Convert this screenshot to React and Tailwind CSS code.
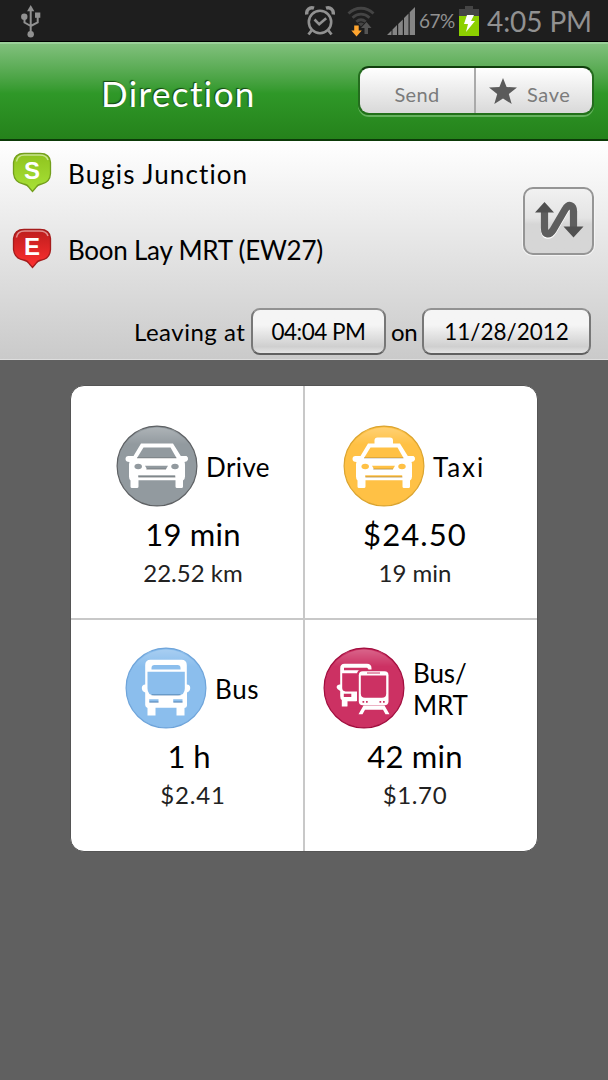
import { useId } from "react";

function StatusBar() {
  return (
    <div className="flex h-[42px] shrink-0 items-center border-b border-black bg-[#1e1e1e] text-[#919191]">
      <svg className="ml-[20px] h-[34px] w-[21px]" viewBox="0 0 21 34" fill="none" stroke="currentColor" strokeWidth="2">
        <path d="M10.7 6v24M4.5 14v4.5l6.2 3.5M17.7 12v6.5L10.7 22" />
        <path d="M10.7 1l3.6 6.2H7.1z" fill="currentColor" stroke="none" />
        <circle cx="4.3" cy="12.8" r="3.2" fill="currentColor" stroke="none" />
        <circle cx="10.7" cy="30.3" r="3.2" fill="currentColor" stroke="none" />
        <path d="M15 8.5h5.3v5.3H15z" fill="currentColor" stroke="none" />
      </svg>

      <svg className="ml-[264px] h-[31px] w-[30px]" viewBox="0 0 30 31" fill="none" stroke="currentColor">
        <circle cx="15" cy="17" r="11.2" strokeWidth="2.6" />
        <path d="M9.5 14.5l4.7 4.8 7-6" strokeWidth="2.6" />
        <path d="M1.8 9.5C1 5 4.800 1.600 9 3.200M28.200 9.500C29 5 25.200 1.600 21 3.200" strokeWidth="3.4" />
        <path d="M6.500 25.500L3.500 29.500M23.500 25.500l3 4" strokeWidth="2.800" />
      </svg>

      <svg className="ml-[12px] h-[32px] w-[28px]" viewBox="0 0 28 32" fill="none" stroke="#444" strokeWidth="2.8">
        <path d="M1.500 8.500c7-7 18-7 25 0M5.500 12.800c5-4.800 12-4.800 17 0M9.300 16.800c3-2.600 6.400-2.600 9.400 0" />
        <path d="M11 18.500q3-2 6 0l-3 3z" fill="#444" stroke="none" />
        <path d="M17.500 29v-6h-3.500l5.500-6 5 6h-3.500v6z" fill="#555" stroke="none" />
        <path d="M7.200 20.500h4.500v5h3.100l-5.300 6-5.200-6h2.900z" fill="#ffa52f" stroke="none" />
      </svg>

      <svg className="ml-[12px] h-[28px] w-[28px]" viewBox="0 0 28 28" fill="#858585">
        <path d="M0 28l4.500-4.500V28zM5.500 28v-5.500l4.500-4.500V28zM11.200 28V17l4.600-4.500V28zM17 28V11l4.500-4.500V28zM22.700 28V5.300L28 0v28z" />
      </svg>

      <span className="ml-[4px] w-[38px] pt-[2px] whitespace-nowrap text-[19px] tracking-[-0.5px]">67%</span>
      <svg className="ml-[2px] h-[30px] w-[20px]" viewBox="0 0 20 30">
        <path d="M0 3h6V0h8v3h6v7H0z" fill="#454545" />
        <path d="M0 10h20v20H0z" fill="#8cd000" />
        <path d="M8 9h7l-3 6h4L7 26l2-8H5z" fill="#fff" />
      </svg>
      <span className="ml-[8px] whitespace-nowrap text-[28px] tracking-[-0.1px]">4:05 PM</span>
    </div>
  );
}

function Header() {
  return (
    <div className="flex h-[99px] shrink-0 items-start border-t-2 border-b-2 border-t-[#9bd09a] border-b-[#0c3a08] bg-linear-to-b from-[#80c07c] via-[#2f9828] via-52% to-[#25821b]">
      <h1 className="mt-[23px] ml-[101px] w-[257px] whitespace-nowrap text-[35px] leading-[52px] tracking-[1.4px] text-white [text-shadow:-1px_-1px_1px_#154711]">
        Direction
      </h1>
      <div className="mt-[22px] flex h-[49px] w-[236px] overflow-hidden rounded-[11px] border-2 border-x-[#246c1e] border-t-[#103f0d] border-b-[#217019] bg-linear-to-b from-white to-[#d9d9d9] text-[20px] text-[#7b7b7b] shadow-[0_2px_0_#65b25e]">
        <button className="w-[116px] border-r-2 border-[#aaa] pt-[6px] tracking-[0.3px]">Send</button>
        <button className="flex flex-1 items-center pl-[13px]">
          <svg className="h-[26px] w-[28px]" viewBox="0 0 28 26" fill="#5b5b5b">
            <path d="M14 0l3.600 9 10.400.500-8.200 6.500 2.900 10L14 20.400 5.300 26l2.900-10L0 9.500 10.400 9z" />
          </svg>
          <span className="ml-[10px] pt-[6px] tracking-[0.6px]">Save</span>
        </button>
      </div>
    </div>
  );
}

function Marker({ letter, end }) {
  const id = useId();
  return (
    <svg className="h-[42px] w-[40px] shrink-0" viewBox="0 0 40 42">
      <defs>
        <linearGradient id={id} x1="0" y1="0" x2="0" y2="1">
          <stop offset="0" stopColor={end ? "#bd1d1d" : "#8fc31e"} />
          <stop offset="1" stopColor={end ? "#ff3030" : "#a8e237"} />
        </linearGradient>
      </defs>
      <path
        d="M12 2.500h16q10 0 10.500 9v11q-.5 9-9 10.500-4 .5-6 4l-3 3.500-3-3.500q-2-3.500-6-4-9-1.500-10-10.500v-11Q2.500 2.500 12 2.500z"
        fill={`url(#${id})`}
        stroke={end ? "#a51c1c" : "#739f1c"}
        strokeWidth="1.300"
      />
      <path d="M4.500 10.500q1-6.500 8-6.500h15q7 0 8.500 5" fill="none" stroke="#fff" strokeOpacity=".5" strokeWidth="1.500" />
      <text x="20" y="28" textAnchor="middle" fill="#fff" className="font-['Liberation_Sans',sans-serif] text-[24px] font-bold">
        {letter}
      </text>
    </svg>
  );
}

function TripForm() {
  return (
    <div className="flex h-[219px] shrink-0 flex-col border-b border-[#dedede] bg-linear-to-b from-white to-[#cacaca] text-black">
      <div className="flex h-[157px]">
        <div className="w-[523px] pl-[12px]">
          <div className="flex h-[76px] items-start pt-[10px]">
            <Marker letter="S" />
            <span className="ml-[16px] pt-[5px] text-[26px] leading-[36px] tracking-[1.1px]">Bugis Junction</span>
          </div>
          <div className="flex h-[76px] items-start pt-[10px]">
            <Marker letter="E" end />
            <span className="ml-[16px] pt-[5px] text-[26px] leading-[36px] tracking-[-0.25px]">Boon Lay MRT (EW27)</span>
          </div>
        </div>
        <button className="mt-[46px] flex h-[68px] w-[71px] items-center justify-center rounded-[10px] border-2 border-[#959595] bg-linear-to-b from-[#f1f1f1] via-[#e4e4e4] via-45% to-[#d6d6d6] to-55% pb-[3px] shadow-[0_0_0_1px_#f4f4f4]">
          <svg className="h-[38px] w-[50px]" viewBox="0 0 50 38">
            <path
              d="M10.500 10v17c0 7.500 5 7.500 8.500 2L31 8.500c4-6.500 8.500-4.500 8.500 2V26"
              fill="none"
              stroke="#fff"
              strokeWidth="7.500"
              transform="translate(0 1.200)"
            />
            <path
              d="M10.500 10v17c0 7.500 5 7.500 8.500 2L31 8.500c4-6.500 8.500-4.500 8.500 2V26"
              fill="none"
              stroke="#5e5e5e"
              strokeWidth="7.300"
            />
            <path d="M1 11.500L10.500 1 20 11.500zM29.500 25.500h20L39.500 36.500z" fill="#505050" />
          </svg>
        </button>
      </div>
      <div className="flex h-[61px] items-start pt-[10px] pl-[134px] text-[24px] leading-[48px]">
        <span className="w-[117px] whitespace-nowrap tracking-[0.5px]">Leaving at</span>
        <button className="h-[47px] w-[135px] rounded-[9px] border-2 border-x-[#777] border-t-[#929292] border-b-[#606060] bg-linear-to-b from-[#f5f5f5] from-35% via-[#cfcfcf] via-85% to-[#e4e4e4] text-[22.5px] leading-[43px] tracking-[-0.5px] whitespace-nowrap">
          04:04 PM
        </button>
        <span className="w-[36px] pl-[5px] tracking-[-0.3px]">on</span>
        <button className="h-[47px] w-[169px] rounded-[9px] border-2 border-x-[#777] border-t-[#929292] border-b-[#606060] bg-linear-to-b from-[#f5f5f5] from-35% via-[#cfcfcf] via-85% to-[#e4e4e4] text-[22.5px] leading-[43px] whitespace-nowrap">
          11/28/2012
        </button>
      </div>
    </div>
  );
}

function Car({ color, taxi }) {
  return (
    <>
      <path
        d="M24.500 18h32l7.800 12.500H70q2 1 1.500 3.500-.5 2-3.500 2.500.5 1 .5 3V51q0 3-2 4v6q0 1.500-1.500 1.500h-4.500Q59 62.500 59 61v-6.300H22V61q0 1.500-1.500 1.500h-5Q14 62.500 14 61v-6q-1.500-1-1.500-4V39.500q0-2 .5-3-4 0-4-3 0-3 3-3h5z"
        fill="#fff"
      />
      {taxi && <path d="M31 19v-4q0-3 3-3h12.500q3 0 3 3v4z" fill="#fff" />}
      <path d="M27 22h27l6 10.500H20.500z" fill={color} />
      <ellipse cx="21.700" cy="41" rx="3.700" ry="2.700" fill={color} />
      <ellipse cx="58.500" cy="41" rx="3.700" ry="2.700" fill={color} />
      <path d="M28.500 40.300h23l-2 3.500h-19zM21.700 49.700h37v2h-37z" fill={color} />
      <path d="M20.500 32.500h39.500M29.500 43.600h20M22 51.500h37" stroke="#000" strokeOpacity=".28" strokeWidth=".9" />
    </>
  );
}

function BusShape({ color }) {
  return (
    <>
      <path
        d="M25 12.300h31q5.300 0 5.300 5.500V37q3.500 0 3.400 3.500 0 3-3.200 4.500v13q0 2-2.500 2.500V68h-8v-7.700H30V68h-8v-7.500q-2.300-1-2.300-3V45q-3.300-1-3.400-4.500Q16.500 37 19.700 37V17.800q0-5.500 5.300-5.500z"
        fill="#fff"
      />
      <path d="M26 22v-1.500q0-3 3-3h23q3 0 3 3V22zM22 24.300h37.300V41q0 6.700-6.700 6.700h-24Q22 47.700 22 41zM23.700 51.700H33V55h-9.300zM47.700 51.700H57V55h-9.300z" fill={color} />
      <path d="M26 47.400h29M24 54.500h9M48 54.500h9" stroke="#123b68" strokeOpacity=".45" strokeWidth="1" />
    </>
  );
}

function BusMrt({ color }) {
  return (
    <>
      <path
        d="M21 16.300h22.500q4.500 0 4.500 4.500v5H36v28h-3.500v5H24V59h-5.700v-6.500q-1.600-1-1.600-4V43.500Q13 41.500 13 39.500q.5-3 3.700-2.500V20.800q0-4.500 4.300-4.500z"
        fill="#fff"
      />
      <path d="M33 53.800h-9V61h9z" fill={color} />
      <path d="M20.500 20.300h23q1.500.5 1.500 2.500H20.500zM18.700 25.700H36V44H22q-3.300-.5-3.300-3.500zM20.300 46.300h7.500v3.200h-7.500z" fill={color} />
      <rect x="33.500" y="22" width="33" height="37" rx="4.500" fill={color} />
      <path d="M40 58h21l5 8.700h-4l-2.500-4.500h-18L39 66.700h-4z" fill="#fff" />
      <rect x="35.300" y="23.700" width="29.700" height="34" rx="4" fill="#fff" />
      <path d="M37.300 28h25.400v18q0 4.300-4.300 4.300H41.600q-4.300 0-4.300-4.300z" fill={color} />
      <path d="M43.500 25.500h13" stroke={color} strokeWidth="1" />
      <path d="M39 53.500h1.700v1.700H39zM42.500 53.500h1.700v1.700h-1.700zM56 53.500h1.700v1.700H56zM59.500 53.500h1.700v1.700h-1.700z" fill={color} />
    </>
  );
}

const modes = [
  { key: "drive", label: "Drive", main: "19 min", sub: "22.52 km", color: "#929a9f", edge: "#5e6164" },
  { key: "taxi", label: "Taxi", main: "$24.50", sub: "19 min", color: "#ffc145", edge: "#dba42f" },
  { key: "bus", label: "Bus", main: "1 h", sub: "$2.41", color: "#8bbeed", edge: "#6ea4da" },
  { key: "mrt", label: "Bus/\nMRT", main: "42 min", sub: "$1.70", color: "#cc3163", edge: "#a10c3d" },
];

const cellStyles = {
  drive: "border-r-2 border-b-2 pl-[45px] pt-[39px]",
  taxi: "border-b-2 pl-[38px] pt-[39px]",
  bus: "border-r-2 pl-[54px] pt-[27px]",
  mrt: "pl-[18px] pt-[27px]",
};

const labelStyles = {
  drive: "tracking-[0.4px]",
  taxi: "tracking-[1.9px]",
  bus: "tracking-[0.6px]",
  mrt: "tracking-[-0.1px]",
};

const valueStyles = {
  drive: "-ml-[45px] pl-[12px]",
  taxi: "-ml-[38px] pr-[12px]",
  bus: "-ml-[54px] pl-[12px]",
  mrt: "-ml-[18px] pr-[12px]",
};

const mainStyles = {
  drive: "tracking-[0.2px]",
  taxi: "tracking-[1.1px]",
  bus: "pr-[8px]",
  mrt: "tracking-[0.2px]",
};

const subStyles = {
  drive: "",
  taxi: "",
  bus: "tracking-[0.8px]",
  mrt: "tracking-[0.6px]",
};

function ModeIcon({ mode }) {
  const id = useId();
  return (
    <svg className="h-[82px] w-[82px] shrink-0" viewBox="-0.500 -0.500 82 82">
      <defs>
        <linearGradient id={id} x1="0" y1="0" x2="0" y2="1">
          <stop offset="0" stopColor="#fff" stopOpacity=".25" />
          <stop offset=".22" stopColor="#fff" stopOpacity="0" />
        </linearGradient>
      </defs>
      <circle cx="40.500" cy="40.500" r="39.900" fill={mode.color} stroke={mode.edge} strokeWidth="1.200" />
      <circle cx="40.500" cy="40.500" r="38.500" fill={`url(#${id})`} />
      {(mode.key === "drive" || mode.key === "taxi") && <Car color={mode.color} taxi={mode.key === "taxi"} />}
      {mode.key === "bus" && <BusShape color={mode.color} />}
      {mode.key === "mrt" && <BusMrt color={mode.color} />}
    </svg>
  );
}

function ModeCell({ mode }) {
  return (
    <div className={`border-[#c8c8c8] ${cellStyles[mode.key]}`}>
      <div className="flex h-[82px] items-center">
        <ModeIcon mode={mode} />
        <span className={`ml-[8px] pt-[2px] text-[26px] leading-[32px] whitespace-pre ${labelStyles[mode.key]}`}>
          {mode.label}
        </span>
      </div>
      <div className={`text-center ${valueStyles[mode.key]}`}>
        <div className={`mt-[7px] text-[31px] leading-[41px] text-black ${mainStyles[mode.key]}`}>{mode.main}</div>
        <div className={`text-[24px] leading-[36px] text-[#222] ${subStyles[mode.key]}`}>{mode.sub}</div>
      </div>
    </div>
  );
}

export default function App() {
  return (
    <div className="flex h-[1080px] w-[608px] flex-col overflow-hidden bg-[#606060] font-['Lato',sans-serif] text-black">
      <StatusBar />
      <Header />
      <TripForm />
      <div className="mx-auto mt-[25px] grid h-[467px] w-[468px] shrink-0 grid-cols-[234px_232px] grid-rows-[234px_231px] overflow-hidden rounded-[14px] border border-[#555] bg-white">
        {modes.map((mode) => (
          <ModeCell key={mode.key} mode={mode} />
        ))}
      </div>
    </div>
  );
}
